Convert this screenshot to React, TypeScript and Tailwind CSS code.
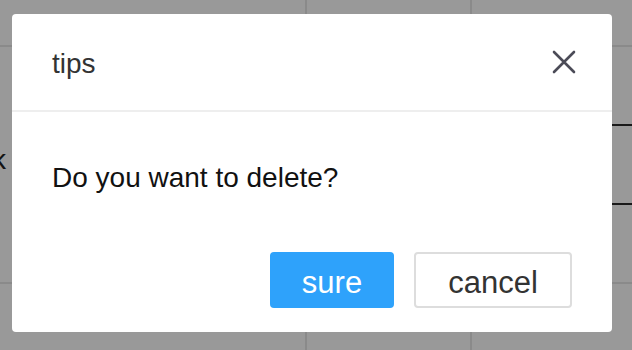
function BackgroundPage(): React.ReactElement {
    return (
        <div className="flex h-[350px] w-[632px] flex-col bg-white font-['Liberation_Sans',Arial,sans-serif]">
            <div className="grid h-[47px] grid-cols-[307px_165px_1fr] border-b-2 border-[#e6e6e6]">
                <div className="border-r-2 border-[#e6e6e6]" />
                <div className="border-r-2 border-[#e6e6e6]" />
                <div />
            </div>
            <div className="flex h-[235px] items-start justify-between">
                <span className="ml-[-8px] mt-[97px] text-[28px] leading-[32px] text-[#222]">k</span>
                <div className="mt-[77px] h-[81px] w-[20px] border-y-2 border-[#2b2b2b]" />
            </div>
            <div className="grid flex-1 grid-cols-[307px_165px_1fr] border-t-2 border-[#e6e6e6]">
                <div className="border-r-2 border-[#e6e6e6]" />
                <div className="border-r-2 border-[#e6e6e6]" />
                <div />
            </div>
        </div>
    );
}

function CloseIcon(): React.ReactElement {
    return (
        <svg viewBox="0 0 24 24" className="h-[24px] w-[24px]" fill="none" stroke="currentColor" strokeWidth={2.6} strokeLinecap="round">
            <path d="M2 2 L22 22 M22 2 L2 22" />
        </svg>
    );
}

function ConfirmDialog(): React.ReactElement {
    return (
        <div className="absolute left-[12px] top-[14px] flex w-[600px] flex-col rounded-[4px] bg-white font-['Liberation_Sans',Arial,sans-serif]">
            <div className="flex h-[98px] items-center justify-between border-b-2 border-[#eeeeee] pl-[40px] pr-[36px]">
                <span className="pt-[4px] text-[28px] leading-[32px] text-[#333333]">tips</span>
                <button className="flex h-[24px] w-[24px] items-center justify-center text-[#4b4b57]">
                    <CloseIcon />
                </button>
            </div>
            <div className="px-[40px] pt-[50px] text-[28px] leading-[32px] text-[#111111]">
                Do you want to delete?
            </div>
            <div className="flex justify-end gap-[20px] pb-[24px] pr-[40px] pt-[58px]">
                <button className="h-[56px] w-[124px] rounded-[4px] bg-[#2ea2fb] pt-[6px] text-[31px] leading-[36px] text-white">
                    sure
                </button>
                <button className="h-[56px] w-[158px] rounded-[4px] border-2 border-[#dddddd] bg-white pt-[6px] text-[31px] leading-[36px] text-[#333333]">
                    cancel
                </button>
            </div>
        </div>
    );
}

export default function App(): React.ReactElement {
    return (
        <div className="relative h-[350px] w-[632px] overflow-hidden">
            <BackgroundPage />
            <div className="absolute inset-0 bg-black/40" />
            <ConfirmDialog />
        </div>
    );
}
